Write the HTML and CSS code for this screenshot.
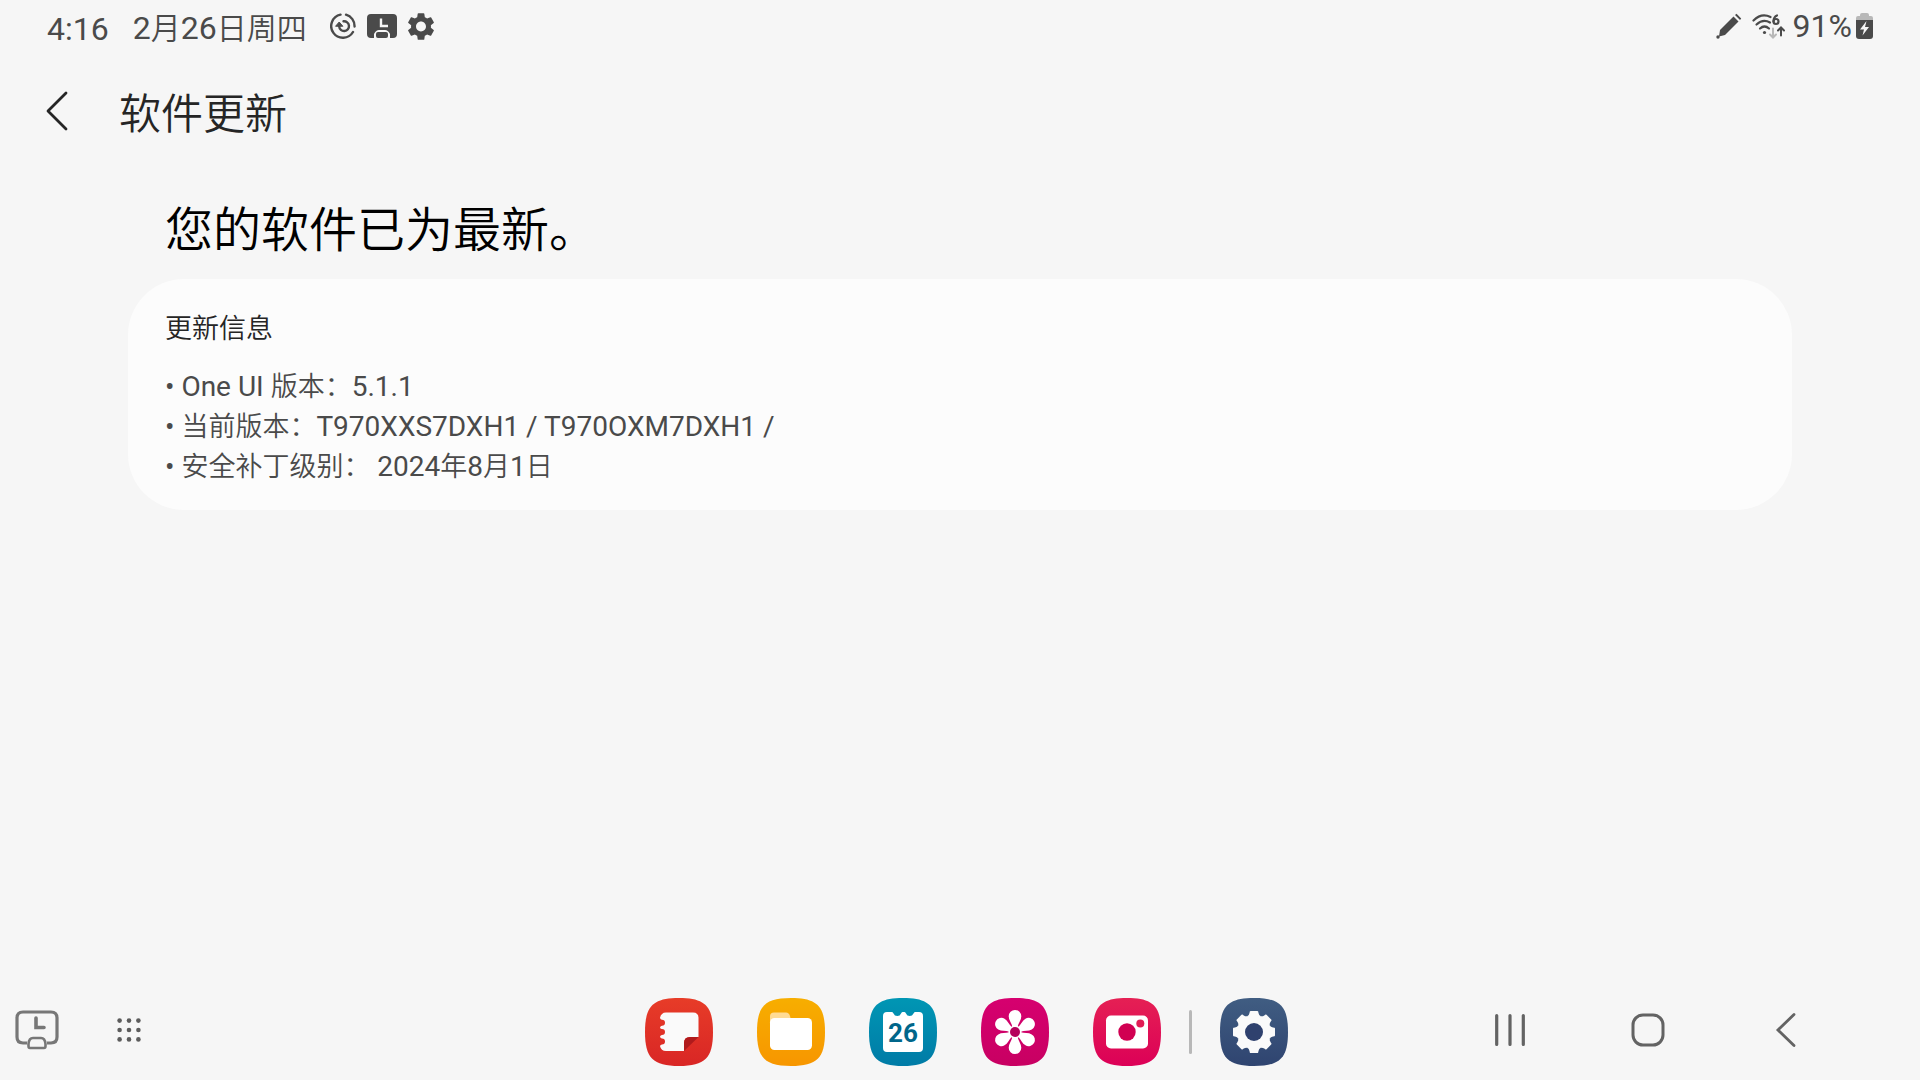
FILE: index.html
```html
<!DOCTYPE html>
<html lang="zh-CN">
	<head>
		<meta charset="UTF-8" />
		<meta name="viewport" content="width=device-width, initial-scale=1.0" />
		<title>软件更新</title>
		<link rel="stylesheet" href="styles.css">
	</head>
	<body>
		<header class="status">
			<div class="status-left">
				<time class="clock">4:16</time>
				<span class="date">2<small>月</small>26<small>日周四</small></span>
				<div class="status-icons">
					<svg width="26" height="26" viewBox="0 0 26 26" fill="none" stroke="#4a4a4a" stroke-width="2.4" stroke-linecap="round">
						<path d="M16 1.700A11.7 11.7 0 0 1 24.600 13.500" />
						<path d="M23 19A11.7 11.7 0 1 1 10.500 1.600" />
						<path d="M13.500 8.300A4.900 4.900 0 1 1 9.200 13.500" />
						<path d="M5.800 13L9.200 9L12.600 13Z" fill="#4a4a4a" stroke-width="1" stroke-linejoin="round" />
					</svg>
					<svg width="30" height="26" viewBox="0 0 30 26">
						<path d="M4 1H26Q30 1 30 5V21Q30 25 26 25H23V21Q21 17 18 17H12Q9 17 7 21V25H4Q0 25 0 21V5Q0 1 4 1Z" fill="#4a4a4a" />
						<path d="M14 5.500V13H21" fill="none" stroke="#f6f6f6" stroke-width="2.400" />
						<rect x="9" y="19" width="12" height="6" rx="2" fill="#4a4a4a" />
					</svg>
					<svg width="26" height="27" viewBox="2.600 2.400 18.800 19.200" fill="#4a4a4a">
						<path d="M19.14 12.94c.04-.3.06-.61.06-.94 0-.32-.02-.64-.07-.94l2.03-1.58a.49.49 0 0 0 .12-.61l-1.92-3.32a.488.488 0 0 0-.59-.22l-2.39.96c-.5-.38-1.03-.7-1.62-.94l-.36-2.54a.484.484 0 0 0-.48-.41h-3.84c-.24 0-.43.17-.47.41l-.36 2.54c-.59.24-1.13.57-1.62.94l-2.39-.96c-.22-.08-.47 0-.59.22L2.74 8.87c-.12.21-.08.47.12.61l2.03 1.58c-.05.3-.09.63-.09.94s.02.64.07.94l-2.03 1.58a.49.49 0 0 0-.12.61l1.92 3.32c.12.22.37.29.59.22l2.39-.96c.5.38 1.03.7 1.62.94l.36 2.54c.05.24.24.41.48.41h3.84c.24 0 .44-.17.47-.41l.36-2.54c.59-.24 1.13-.56 1.62-.94l2.39.96c.22.08.47 0 .59-.22l1.92-3.32c.12-.22.07-.47-.12-.61l-2.01-1.58zM12 15.6c-1.98 0-3.6-1.62-3.6-3.6s1.62-3.6 3.6-3.6 3.6 1.62 3.6 3.6-1.62 3.6-3.6 3.6z" />
					</svg>
				</div>
			</div>
			<div class="status-right">
				<svg width="26" height="26" viewBox="0 0 26 26" fill="#4a4a4a">
					<path d="M4 17L17.500 3.500L22.500 8.500L9 22L3 23.500Z" />
					<path d="M19 2L20.500 0.800L25.200 5.500L24 7Z" />
					<circle cx="2" cy="24" r="1.700" />
				</svg>
				<svg class="wifi" width="33" height="25" viewBox="0 0 33 25" fill="none" stroke="#4a4a4a" stroke-width="2.200" stroke-linecap="round">
					<path d="M1.500 6.500Q9.500 -1.500 18.500 3" />
					<path d="M4.500 10.500Q11 4.500 18 8.500" />
					<path d="M8 14.500Q12.500 10.500 17 14.500" />
					<circle cx="12.500" cy="18.500" r="1.600" fill="#4a4a4a" stroke="none" />
					<path d="M25 1.500Q21.500 3 21.500 7.500" />
					<circle cx="24" cy="7.500" r="2.500" />
					<path d="M21 14.500V23M18 20.500L21 23.500L24 20.500" stroke="#b8b8b8" stroke-width="2" />
					<path d="M29 21.500V13.500M26 16.500L29 13.500L32 16.500" stroke-width="2" />
				</svg>
				<span class="battery-level">91%</span>
				<svg width="17" height="26" viewBox="0 0 17 26">
					<path d="M0 8V5Q0 3 2 3H4V2Q4 0 6 0H11Q13 0 13 2V3H15Q17 3 17 5V8Z" fill="#b8b8b8" />
					<path d="M0 7H17V23Q17 26 14 26H3Q0 26 0 23Z" fill="#4a4a4a" />
					<path d="M10.500 8L4 16.500H8L6.500 22.500L13 14H9Z" fill="#f6f6f6" />
				</svg>
			</div>
		</header>

		<div class="toolbar">
			<button class="icon-btn" aria-label="返回">
				<svg width="22" height="40" viewBox="0 0 22 40" fill="none" stroke="#252525" stroke-width="2.800" stroke-linecap="round" stroke-linejoin="round">
					<path d="M20 2L2 20L20 38" />
				</svg>
			</button>
			<h1>软件更新</h1>
		</div>

		<main class="content">
			<h2>您的软件已为最新。</h2>
			<section class="card">
				<h3>更新信息</h3>
				<ul>
					<li>• One UI <small>版本：</small>5.1.1</li>
					<li>• <small>当前版本：</small>T970XXS7DXH1 / T970OXM7DXH1 /</li>
					<li>• <small>安全补丁级别：</small> 2024<small>年</small>8<small>月</small>1<small>日</small></li>
				</ul>
			</section>
		</main>

		<footer class="taskbar">
			<div class="tools">
				<button class="icon-btn" aria-label="DeX">
					<svg width="44" height="40" viewBox="0 0 44 40" fill="none" stroke="#777" stroke-width="3.200">
						<path d="M12 33H8Q2 33 2 27V8Q2 2 8 2H36Q42 2 42 8V27Q42 33 36 33H32" />
						<path d="M13.500 36V34Q14 28 18 28H26Q30 28 30.500 34V36Q30.500 38 29 38H15Q13.500 38 13.500 36Z" stroke-width="2.600" />
						<path d="M21 8V17.500H29" stroke-width="3.600" stroke-linecap="round" />
					</svg>
				</button>
				<button class="icon-btn" aria-label="应用程序">
					<svg width="24" height="24" viewBox="0 0 24 24" fill="#5c5c5c">
						<circle cx="2.600" cy="2.600" r="2.300" /><circle cx="12" cy="2.600" r="2.300" /><circle cx="21.400" cy="2.600" r="2.300" />
						<circle cx="2.600" cy="12" r="2.300" /><circle cx="12" cy="12" r="2.300" /><circle cx="21.400" cy="12" r="2.300" />
						<circle cx="2.600" cy="21.400" r="2.300" /><circle cx="12" cy="21.400" r="2.300" /><circle cx="21.400" cy="21.400" r="2.300" />
					</svg>
				</button>
			</div>

			<div class="dock">
				<button class="icon-btn" aria-label="笔记">
					<svg width="68" height="68" viewBox="0 0 68 68">
						<linearGradient id="notes" x2="0" y2="1"><stop stop-color="#e73c28" /><stop offset="1" stop-color="#d92625" /></linearGradient>
						<path d="M34 0C60 0 68 8 68 34S60 68 34 68 0 60 0 34 8 0 34 0Z" fill="url(#notes)" />
						<path d="M21 14.500H48Q53.500 14.500 53.500 20V39H45Q39 39 39 45V53H21Q16 53 15 48Q15.500 46.500 17 46.500A3 3 0 0 0 17 40.500Q15.500 40.500 15 38.700Q15.500 37 17 37A3 3 0 0 0 17 31Q15.500 31 15 29.500Q15.500 27.800 17 27.800A3 3 0 0 0 17 21.800Q15.500 21.800 15 20Q16 14.500 21 14.500Z" fill="#fafafa" />
						<path d="M39 53V45Q39 39 45 39H53.500Z" fill="#b01a1c" />
					</svg>
				</button>
				<button class="icon-btn" aria-label="我的文件">
					<svg width="68" height="68" viewBox="0 0 68 68">
						<linearGradient id="files" x2="0" y2="1"><stop stop-color="#f7ae00" /><stop offset="1" stop-color="#f79600" /></linearGradient>
						<path d="M34 0C60 0 68 8 68 34S60 68 34 68 0 60 0 34 8 0 34 0Z" fill="url(#files)" />
						<path d="M13 26V18.500Q13 14.500 17 14.500H29Q32 14.500 33 18L34 22Z" fill="#ffdb94" />
						<rect x="13" y="20" width="42" height="32" rx="4.500" fill="#fff" />
					</svg>
				</button>
				<button class="icon-btn" aria-label="日历">
					<svg width="68" height="68" viewBox="0 0 68 68">
						<linearGradient id="calendar" x2="0" y2="1"><stop stop-color="#0096b4" /><stop offset="1" stop-color="#007ba6" /></linearGradient>
						<path d="M34 0C60 0 68 8 68 34S60 68 34 68 0 60 0 34 8 0 34 0Z" fill="url(#calendar)" />
						<path d="M18 14H23Q24 14 24.500 15.500Q25.500 18 28.300 18T32 15.500Q32.500 14 33.500 14H35.500Q36.500 14 37 15.500Q38 18 40.700 18T44.500 15.500Q45 14 46 14H50Q54 14 54 18V50Q54 54 50 54H18Q14 54 14 50V18Q14 14 18 14Z" fill="#fff" />
						<text class="day" x="34" y="44" text-anchor="middle">26</text>
					</svg>
				</button>
				<button class="icon-btn" aria-label="相册">
					<svg width="68" height="68" viewBox="0 0 68 68">
						<linearGradient id="gallery" x2="0" y2="1"><stop stop-color="#d6006f" /><stop offset="1" stop-color="#c80062" /></linearGradient>
						<path d="M34 0C60 0 68 8 68 34S60 68 34 68 0 60 0 34 8 0 34 0Z" fill="url(#gallery)" />
						<defs><path id="petal" d="M-2.500 -5C-3.500 -9 -6.300 -12 -6.300 -15.700A6.300 6.300 0 0 1 6.300 -15.700C6.300 -12 3.500 -9 2.500 -5Z" /></defs>
						<g transform="translate(34 34)" fill="#fff">
							<use href="#petal" />
							<use href="#petal" transform="rotate(60)" />
							<use href="#petal" transform="rotate(120)" />
							<use href="#petal" transform="rotate(180)" />
							<use href="#petal" transform="rotate(240)" />
							<use href="#petal" transform="rotate(300)" />
							<circle r="6.500" />
						</g>
						<circle cx="34" cy="34" r="5" fill="#b5005b" />
					</svg>
				</button>
				<button class="icon-btn" aria-label="相机">
					<svg width="68" height="68" viewBox="0 0 68 68">
						<linearGradient id="camera" x2="0" y2="1"><stop stop-color="#e52054" /><stop offset="1" stop-color="#dc0057" /></linearGradient>
						<path d="M34 0C60 0 68 8 68 34S60 68 34 68 0 60 0 34 8 0 34 0Z" fill="url(#camera)" />
						<rect x="13" y="17.500" width="42" height="33" rx="5" fill="#fff" />
						<circle cx="34" cy="34" r="8.700" fill="#d10052" />
						<circle cx="47.300" cy="25.500" r="4" fill="#e11c55" />
					</svg>
				</button>
				<span class="divider"></span>
				<button class="icon-btn" aria-label="设置">
					<svg width="68" height="68" viewBox="0 0 68 68">
						<linearGradient id="settings" x2="0" y2="1"><stop stop-color="#405d82" /><stop offset="1" stop-color="#2f4470" /></linearGradient>
						<path d="M34 0C60 0 68 8 68 34S60 68 34 68 0 60 0 34 8 0 34 0Z" fill="url(#settings)" />
						<defs><path id="teeth" d="M-7 0L-6.500 -16Q-5 -16.500 -4.500 -19L-4.200 -20.500Q-4 -21 -3.300 -21H3.300Q4 -21 4.200 -20.500L4.500 -19Q5 -16.500 6.500 -16L7 0Z" /></defs>
						<g transform="translate(34 34)" fill="#fafafa">
							<use href="#teeth" />
							<use href="#teeth" transform="rotate(45)" />
							<use href="#teeth" transform="rotate(90)" />
							<use href="#teeth" transform="rotate(135)" />
							<use href="#teeth" transform="rotate(180)" />
							<use href="#teeth" transform="rotate(225)" />
							<use href="#teeth" transform="rotate(270)" />
							<use href="#teeth" transform="rotate(315)" />
						</g>
						<circle cx="34" cy="34" r="9" fill="#2f416e" />
					</svg>
				</button>
			</div>

			<nav class="nav">
				<button class="icon-btn" aria-label="最近">
					<svg width="34" height="34" viewBox="0 0 34 34" stroke="#636363" stroke-width="3.200" stroke-linecap="round">
						<path d="M3.700 2.500V31.500M17 2.500V31.500M30.300 2.500V31.500" />
					</svg>
				</button>
				<button class="icon-btn" aria-label="主页">
					<svg width="34" height="34" viewBox="0 0 34 34" fill="none" stroke="#636363" stroke-width="3">
						<rect x="2" y="2" width="30" height="30" rx="10" />
					</svg>
				</button>
				<button class="icon-btn" aria-label="返回">
					<svg width="34" height="34" viewBox="0 0 34 34" fill="none" stroke="#636363" stroke-width="2.800" stroke-linecap="round">
						<path d="M25 1.500L9 17L25 32.500" />
					</svg>
				</button>
			</nav>
		</footer>
	</body>
</html>
```
FILE: styles.css
```css
* {
	box-sizing: border-box;
	margin: 0;
	padding: 0;
}
body {
	display: flex;
	flex-direction: column;
	min-height: 100vh;
	background: #f6f6f6;
	color: #252525;
	font-family: Roboto, "Noto Sans CJK SC", sans-serif;
}
svg {
	display: block;
}
small,
h1,
h2,
h3 {
	font-weight: 350;
}
.icon-btn {
	border: none;
	background: none;
	font: inherit;
	cursor: pointer;
}

.status {
	display: flex;
	justify-content: space-between;
	height: 52px;
	padding: 0 47px;
	color: #4a4a4a;
	font-size: 32px;
	line-height: 52px;
}
.status-left,
.status-right,
.status-icons {
	display: flex;
	align-items: center;
}
.clock,
.date {
	padding-top: 5px;
}
.date {
	margin-left: 24px;
}
.date small {
	font-size: 30px;
}
.status-icons {
	gap: 11px;
	margin-left: 23px;
}
.wifi {
	margin: 0 8px 0 10px;
}
.battery-level {
	margin-right: 4px;
}

.toolbar {
	display: flex;
	align-items: center;
	gap: 51px;
	height: 124px;
	padding: 0 46px 6px;
}
h1 {
	padding-top: 8px;
	font-size: 42px;
	line-height: 60px;
}

.content {
	flex: 1;
	padding: 19px 128px 0;
}
h2 {
	padding: 0 37px;
	color: #000;
	font-size: 48px;
	line-height: 72px;
}
.card {
	margin-top: 12px;
	padding: 30px 37px 23px;
	border-radius: 56px;
	background: #fcfcfc;
}
h3 {
	margin-bottom: 18px;
	font-size: 27px;
	line-height: 40px;
}
ul {
	color: #4a4a4a;
	font-size: 28px;
	line-height: 40px;
	list-style: none;
}
li small {
	font-size: 27px;
}

.taskbar {
	display: grid;
	grid-template-columns: 1fr auto 1fr;
	align-items: center;
	padding: 0 0 14px 12px;
}
.tools,
.dock,
.nav {
	display: flex;
	align-items: center;
}
.tools {
	gap: 58px;
	padding: 0 0 4px 3px;
}
.dock {
	gap: 44px;
}
.divider {
	width: 3px;
	height: 44px;
	margin: 0 -16px;
	border-radius: 2px;
	background: #b8b8b8;
}
.nav {
	justify-content: flex-end;
	gap: 104px;
	padding: 0 117px 5px 0;
}
.day {
	fill: #00668a;
	font-size: 26px;
	font-weight: 700;
}
```
